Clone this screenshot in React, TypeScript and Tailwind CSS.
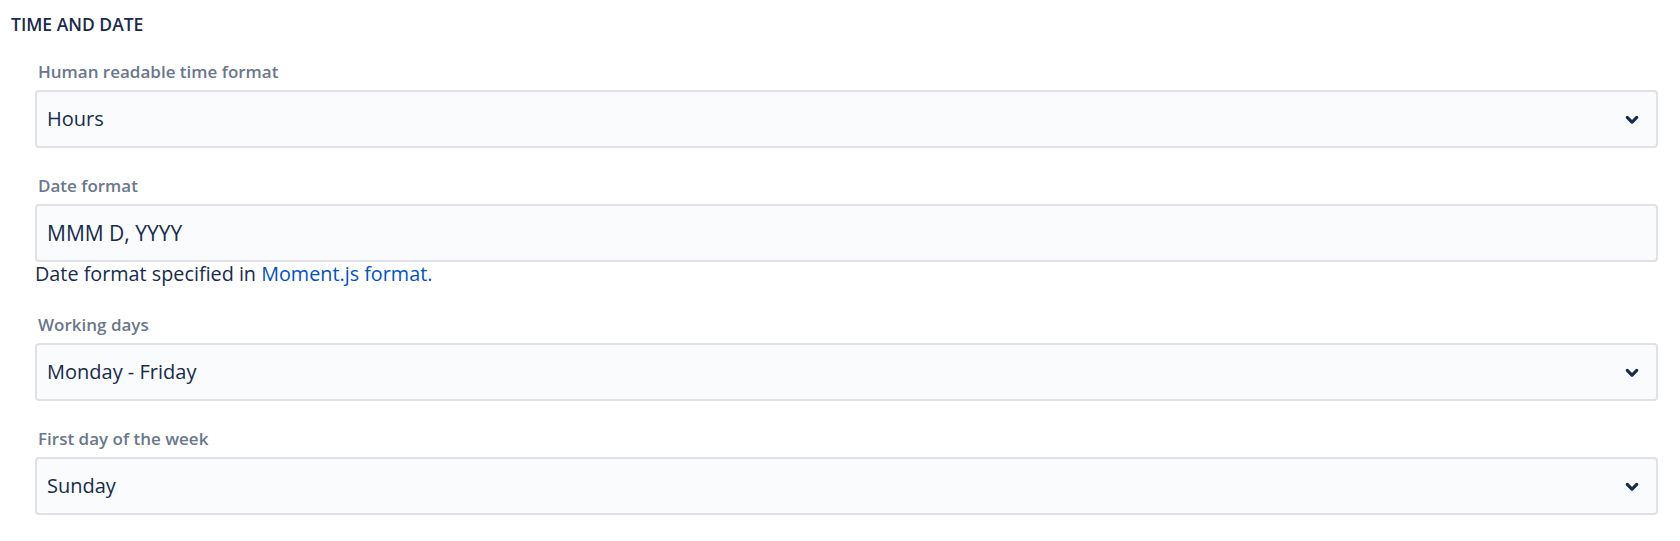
import type { ReactNode } from "react";

const font = { fontFamily: '"Open Sans", "Noto Sans", sans-serif' };

const ChevronDown = () => (
  <svg width="38" height="38" viewBox="0 0 24 24" aria-hidden="true">
    <path
      fill="#172B4D"
      d="M8.292 10.293a1.009 1.009 0 000 1.419l2.939 2.965c.218.215.5.322.779.322s.556-.107.769-.322l2.93-2.955a1.01 1.01 0 000-1.419.987.987 0 00-1.406 0l-2.298 2.317-2.307-2.327a.99.99 0 00-1.406 0z"
    />
  </svg>
);

const Field = ({ label, children }: { label: string; children: ReactNode }) => (
  <div className="flex flex-col">
    <label className="mb-[7px] pl-[3px] text-[17px] font-semibold leading-[22px] text-[#6B778C]">
      {label}
    </label>
    {children}
  </div>
);

const SelectBox = ({ value }: { value: string }) => (
  <button
    type="button"
    className="flex h-[58px] w-full items-center justify-between rounded-[4px] border-2 border-[#DFE1E6] bg-[#FAFBFC] pl-[10px] pr-[5px] text-left text-[20px] text-[#172B4D]"
  >
    <span>{value}</span>
    <ChevronDown />
  </button>
);

export default function App() {
  return (
    <div className="min-h-screen bg-white" style={font}>
      <div className="pl-[11px] pt-[12px]">
        <h2 className="text-[17.5px] font-semibold leading-[25px] text-[#172B4D]">
          TIME AND DATE
        </h2>
      </div>
      <div className="flex flex-col pl-[35px] pr-[22px] pt-[24px]">
        <Field label="Human readable time format">
          <SelectBox value="Hours" />
        </Field>

        <div className="mt-[27px]">
          <Field label="Date format">
            <input
              type="text"
              defaultValue="MMM D, YYYY"
              className="h-[58px] w-full rounded-[4px] border-2 border-[#DFE1E6] bg-[#FAFBFC] px-[10px] text-[21px] text-[#172B4D] outline-none"
            />
          </Field>
          <p className="mt-0 text-[19.8px] leading-[24px] text-[#172B4D]">
            Date format specified in{" "}
            <a href="#" className="text-[#0052CC]">
              Moment.js format.
            </a>
          </p>
        </div>

        <div className="mt-[28px]">
          <Field label="Working days">
            <SelectBox value="Monday - Friday" />
          </Field>
        </div>

        <div className="mt-[27px]">
          <Field label="First day of the week">
            <SelectBox value="Sunday" />
          </Field>
        </div>
      </div>
    </div>
  );
}
